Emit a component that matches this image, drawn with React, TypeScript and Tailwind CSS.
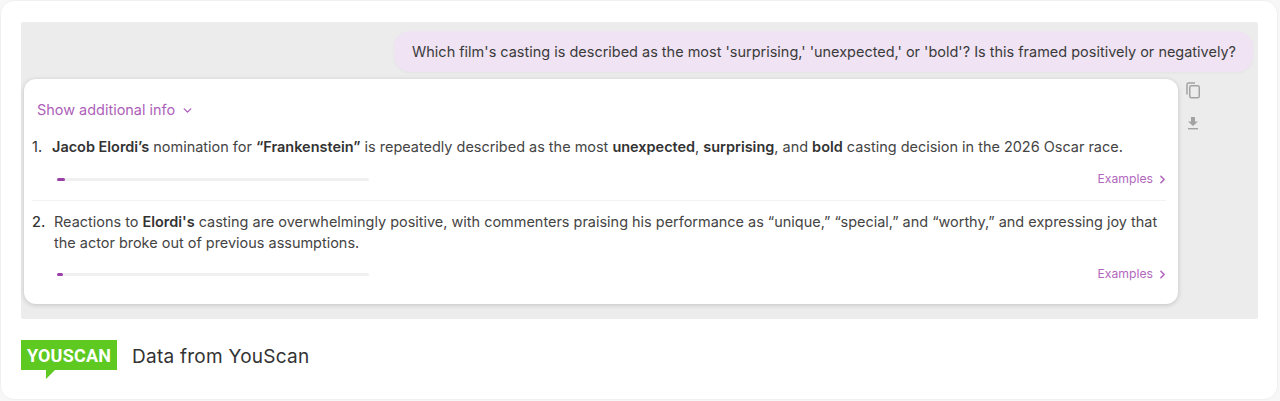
import { ChevronDown, ChevronRight } from "lucide-react";

const font = "font-['Inter',sans-serif]";

function ExampleRow({ fill }: { fill: string }) {
  return (
    <div className="flex h-[16px] items-center justify-between">
      <div className="ml-[25px] h-[3px] w-[312px] rounded-full bg-[#f0f0f0]">
        <div className={"h-[3px] rounded-full bg-[#9b3fa8] " + fill} />
      </div>
      <div className="mr-[8px] flex items-center gap-[3px] text-[12.2px] leading-[16px] text-[#b267bd]">
        Examples
        <ChevronRight size={13} strokeWidth={3} />
      </div>
    </div>
  );
}

export default function App() {
  return (
    <div className={"h-[401px] w-[1280px] bg-[#f7f7f7] " + font}>
      <div className="h-[400px] w-[1278px] rounded-[14px] border border-[#f0f0f0] bg-white pt-[21px] pl-[20px]">
        <div className="h-[297px] w-[1237px] rounded-[2px] bg-[#ececec] pt-[9px] pl-[3px]">
          <div className="flex justify-end pr-[5px]">
            <div className="flex h-[41px] items-center rounded-[16px] bg-[#efe3f4] pr-[17px] pl-[18px] text-[14.48px] whitespace-nowrap text-[#3a3a3a] shadow-[0_1px_3px_rgba(0,0,0,0.04)]">
              Which film's casting is described as the most 'surprising,' 'unexpected,' or 'bold'? Is this framed positively or negatively?
            </div>
          </div>
          <div className="mt-[7px] flex items-start gap-[7px]">
            <div className="h-[225px] w-[1154px] rounded-[12px] bg-white pt-[21px] pr-[1px] pl-[8px] text-[14.46px] text-[#444] shadow-[0_1px_5px_rgba(0,0,0,0.18)]">
              <div className="ml-[5px] flex h-[20px] items-center gap-[6px] text-[#ad5fb9]">
                Show additional info
                <ChevronDown size={13} strokeWidth={2.5} />
              </div>
              <div className="mt-[17px] flex h-[20px] items-center whitespace-nowrap">
                <span className="w-[20px] text-[#333]">1.</span>
                <span>
                  <b className="font-semibold text-[#333]">Jacob Elordi’s</b> nomination for{" "}
                  <b className="font-semibold text-[#333]">“Frankenstein”</b> is repeatedly described as the most{" "}
                  <b className="font-semibold text-[#333]">unexpected</b>,{" "}
                  <b className="font-semibold text-[#333]">surprising</b>, and{" "}
                  <b className="font-semibold text-[#333]">bold</b> casting decision in the 2026 Oscar race.
                </span>
              </div>
              <div className="mt-[14px]">
                <ExampleRow fill="w-[8px]" />
              </div>
              <div className="mt-[13px] mr-[11px] h-px bg-[#f2f2f2]" />
              <div className="mt-[10px] flex">
                <span className="w-[22px] shrink-0 leading-[21px] font-medium text-[#333]">2.</span>
                <div className="w-[1110px] leading-[21px]">
                  Reactions to <b className="font-semibold text-[#333]">Elordi's</b> casting are overwhelmingly positive, with commenters praising his performance as “unique,” “special,” and “worthy,” and expressing joy that the actor broke out of previous assumptions.
                </div>
              </div>
              <div className="mt-[13px]">
                <ExampleRow fill="w-[6px]" />
              </div>
            </div>
            <div className="flex flex-col items-center gap-[17px] pt-[3px]">
              <svg width="16" height="17" viewBox="0 0 16 17" fill="none" stroke="#a3a3a3" strokeWidth="1.5">
                <path d="M2 12.5V2.5a1.5 1.5 0 0 1 1.5-1.5H10" />
                <rect x="4.75" y="3.75" width="9.5" height="12" rx="1.5" />
              </svg>
              <svg width="12" height="14" viewBox="0 0 12 14" fill="#a3a3a3">
                <path d="M4 1h4v4.5h3L6 10 1 5.5h3z" />
                <rect x="1" y="12" width="10" height="1.4" />
              </svg>
            </div>
          </div>
        </div>
        <div className="mt-[21px] flex items-start gap-[15px]">
          <div className="relative h-[30px] w-[96px] bg-[#5ec920]">
            <div className="pt-px text-center font-['Roboto',sans-serif] text-[18px] leading-[30px] font-bold tracking-[0.2px] text-white">
              YOUSCAN
            </div>
            <svg className="absolute top-[30px] left-[25px]" width="9" height="9" viewBox="0 0 9 9" fill="#5ec920">
              <path d="M0 0h9L0 9z" />
            </svg>
          </div>
          <div className="pt-[2px] text-[19px] leading-[30px] tracking-[0.25px] text-[#333]">Data from YouScan</div>
        </div>
      </div>
    </div>
  );
}
